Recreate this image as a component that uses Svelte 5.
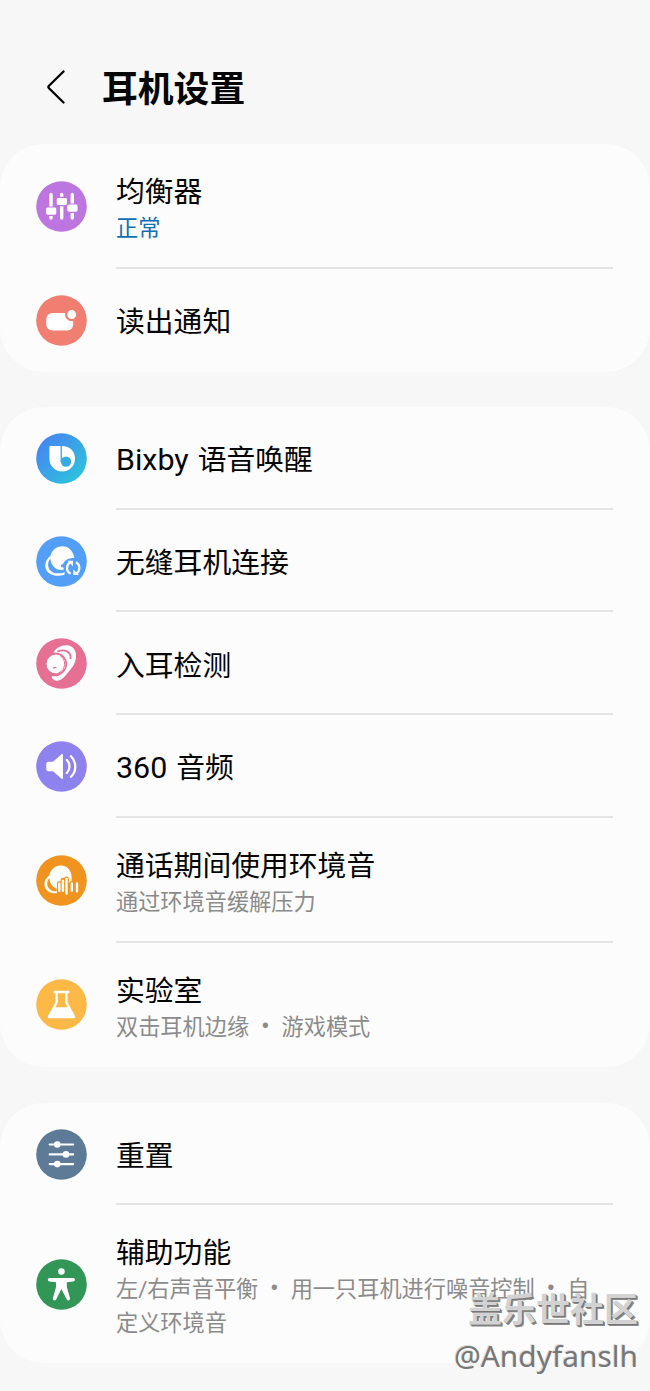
<script lang="ts">
  type Row = { icon: string; title: string; latin?: string; sub?: string[]; active?: boolean };

  const groups: Row[][] = [
    [
      { icon: 'equalizer', title: '均衡器', sub: ['正常'], active: true },
      { icon: 'notification', title: '读出通知' }
    ],
    [
      { icon: 'bixby', latin: 'Bixby', title: '语音唤醒' },
      { icon: 'seamless', title: '无缝耳机连接' },
      { icon: 'ear', title: '入耳检测' },
      { icon: 'audio', latin: '360', title: '音频' },
      { icon: 'ambient', title: '通话期间使用环境音', sub: ['通过环境音缓解压力'] },
      { icon: 'labs', title: '实验室', sub: ['双击耳机边缘', '游戏模式'] }
    ],
    [
      { icon: 'reset', title: '重置' },
      {
        icon: 'accessibility',
        title: '辅助功能',
        sub: ['左/右声音平衡', '用一只耳机进行噪音控制', '自定义环境音']
      }
    ]
  ];

  const colors: Record<string, string> = {
    equalizer: '#bd75e0',
    notification: '#f07f72',
    bixby: 'url(#bixby-fill)',
    seamless: '#539ff8',
    ear: '#e66f94',
    audio: '#8d82ee',
    ambient: '#f0941f',
    labs: '#fdb845',
    reset: '#5d7b96',
    accessibility: '#329657'
  };
</script>

<div class="page">
  <header>
    <button class="back" aria-label="返回">
      <svg width="20" height="34" viewBox="0 0 20 34" fill="none" stroke="#000" stroke-width="2.3" stroke-linecap="round" stroke-linejoin="round">
        <path d="M17.5 1.5 3 15.8Q1.8 17 3 18.2L17.5 32.5" />
      </svg>
    </button>
    <h1>耳机设置</h1>
  </header>

  {#each groups as rows}
    <section class="card">
      {#each rows as row}
        <div class="row" class:two={row.sub} class:three={row.sub && row.sub.length > 2}>
          <svg class="icon" viewBox="0 0 51 51">
            <defs>
              <linearGradient id="bixby-fill" x1="0" y1="0" x2="1" y2="1">
                <stop offset="0.15" stop-color="#4688f0" />
                <stop offset="0.9" stop-color="#2cc4dc" />
              </linearGradient>
            </defs>
            <circle cx="25.5" cy="25.5" r="25.3" fill={colors[row.icon]} />
            {#if row.icon === 'equalizer'}
              <path stroke="#fff" stroke-width="3.4" stroke-linecap="round" d="M15 13.4v23.6M25.7 13.4v23.6M36.3 13.4v23.6" />
              <g fill="#fff" stroke="#bd75e0" stroke-width="1.2">
                <rect x="9.5" y="26" width="11.4" height="8.3" rx="2" />
                <rect x="20.1" y="16.4" width="11.4" height="8.3" rx="2" />
                <rect x="30.7" y="23" width="11.4" height="8.3" rx="2" />
              </g>
            {:else if row.icon === 'notification'}
              <rect x="10.3" y="18" width="26.9" height="17.4" rx="6" fill="#fff" />
              <circle cx="35.7" cy="19.6" r="5.6" fill="#fff" stroke="#f07f72" stroke-width="2.2" />
            {:else if row.icon === 'bixby'}
              <path fill="#fff" d="M14.2 13H27C34.5 13.4 39 19 39 25.8a12.8 12.8 0 0 1-25.6 0V13.8q0-.8.8-.8z" />
              <path fill="none" stroke="#3b9fe9" stroke-width="1.3" d="M25.2 13v16" />
              <circle cx="30" cy="28.6" r="5.2" fill="#35abe4" />
            {:else if row.icon === 'seamless'}
              <path fill="#fff" d="M14.4 20C8 24.5 7.8 32.5 12.5 36.7 16.8 40.3 23 40.3 28.4 38.8L30 29 38.3 21.5C37 15 32.6 10.2 26.5 10.2 20.3 10.2 15.8 14.2 14.4 20z" />
              <path fill="#539ff8" d="M14.3 22.5C10.2 27.5 11.8 35.6 19.5 37.3L26 37.2 28.5 36V33.5C21.5 35.8 15 30.5 14.3 22.5z" />
              <path fill="#539ff8" d="M38.5 22.2C33 21.5 28.3 24.5 27 28.3L25 28.8V31L27.5 31.6C27.5 36 30 40.3 34 41.5H42V22.2z" />
              <path fill="none" stroke="#fff" stroke-width="2.2" d="M34.6 37.8a6.5 6.5 0 0 1-.5-11.4M40 26.2a6.500 6.500 0 0 1 .2 11.3" />
              <path fill="#fff" d="M31.5 24.8h5.500v5.500zM43 39h-5.700v-5.600z" />
            {:else if row.icon === 'ear'}
              <path fill="#fff" d="M17.4 14.6C20.2 9.6 26 6.6 31.5 7.3 38 8.2 41 13.8 39.9 20.5 38.8 27 35.6 30.2 31.4 35.3 27.8 39.8 24.8 43 20.6 42.7 17.6 42.5 15.8 40.7 15.5 38.2 24 39.3 30.9 33.5 31.1 26.2 31.3 19.2 25.5 14.4 17.4 14.6z" />
              <path fill="none" stroke="#e66f94" stroke-width="1.8" stroke-linecap="round" d="M22 13.4C28.5 10.5 35.2 14 34.6 20.3" />
              <circle cx="20" cy="26" r="10" fill="#fff" stroke="#e66f94" stroke-width="1" />
              <path fill="none" stroke="#e66f94" stroke-width="1" d="M23.6 17.2A10 10 0 0 1 22.6 35" />
              <path stroke="#e66f94" stroke-width="1.2" stroke-linecap="round" d="M17.3 29.8 20 29.3" />
            {:else if row.icon === 'audio'}
              <path fill="#fff" d="M12.3 20.7H17L25.6 13.2Q27 12.3 27 14V37Q27 38.7 25.6 37.8L17 30.3H12.3Q10.3 30.3 10.3 28.5V22.5Q10.3 20.7 12.3 20.7z" />
              <path fill="none" stroke="#fff" stroke-width="2.3" stroke-linecap="round" d="M30.8 19a9.2 9.2 0 0 1 0 13M35 15.2a14.5 14.5 0 0 1 0 20.6" />
            {:else if row.icon === 'ambient'}
              <path fill="#fff" d="M13.3 20.5C7.3 24.5 7 32 11.5 35.8 14.5 38.3 18.5 38.7 21.8 38L24 33 35.6 26.5V22C35.6 15.4 30.8 10.6 24.9 10.6 19 10.6 14.5 14.7 13.3 20.5z" />
              <path fill="#f0941f" d="M13.3 23C9.5 27.5 11 34.5 17.5 36.2L20.8 36.2V33.8C16.5 32.2 13.6 28.3 13.3 23z" />
              <path stroke="#f0941f" stroke-width="4.8" stroke-linecap="round" d="M23.3 28.7v10M26.9 25.2v13M30.5 24v15M35.8 28.5v8" />
              <path stroke="#fff" stroke-width="2.4" stroke-linecap="round" d="M23.3 28.7v7M26.9 26v9.7M30.5 24v14.5M35.8 28.5v7.2M41 28.5v7.7" />
            {:else if row.icon === 'labs'}
              <path fill="#fff" d="M18.7 11.7h13.6a1.2 1.2 0 0 1 0 2.5h-.8v9L39 36.8Q40 39.2 37.6 39.2H13.4Q11 39.2 12 36.8L19.5 23.2v-9h-.8a1.2 1.2 0 0 1 0-2.5z" />
              <path fill="#fdb845" d="M21.8 14.2h7.4v9.6l2.4 4.500H19.4l2.4-4.500z" />
            {:else if row.icon === 'reset'}
              <path stroke="#fff" stroke-width="2.2" stroke-linecap="round" d="M13.7 15.5h23.4M13.7 25.4h23.4M13.7 35.1h23.4" />
              <g fill="#fff">
                <circle cx="21.3" cy="15.5" r="3.3" />
                <circle cx="30" cy="25.4" r="3.3" />
                <circle cx="21.3" cy="35.1" r="3.3" />
              </g>
            {:else}
              <circle cx="25.4" cy="12.5" r="3.3" fill="#fff" />
              <path fill="#fff" d="M13.6 19h23.6a1.8 1.8 0 0 1 0 3.6l-6.4.6v4.6l3.2 11.4c.6 2.2-2.3 3-3.2 1.2L25.4 30 20.1 40.4c-.9 1.8-3.9 1-3.2-1.2l3.2-11.4v-4.6l-6.5-.6a1.800 1.800 0 0 1 0-3.600z" />
            {/if}
          </svg>
          <div class="text">
            <div class="title">
              {#if row.latin}<span class="latin">{row.latin}</span>{/if}{row.title}
            </div>
            {#if row.sub}
              <div class="sub" class:active={row.active}>
                {#each row.sub as part, i}{#if i > 0}<span class="dot">•</span>{/if}{part}{/each}
              </div>
            {/if}
          </div>
        </div>
      {/each}
    </section>
  {/each}

  <div class="watermark">
    <div class="site">盖乐世社区</div>
    <div class="user">@Andyfanslh</div>
  </div>
</div>

<style>
  :global(body) {
    margin: 0;
    background: #f7f7f7;
  }

  .page {
    position: relative;
    width: 650px;
    height: 1391px;
    overflow: hidden;
    background: #f7f7f7;
    color: #050505;
    font-family: Roboto, 'Noto Sans CJK SC', sans-serif;
  }

  header {
    display: flex;
    align-items: center;
    height: 144.2px;
    padding: 30px 0 0 46px;
    box-sizing: border-box;
  }

  .back {
    display: flex;
    width: 56px;
    padding: 0;
    border: none;
    background: none;
  }

  h1 {
    margin: 0;
    padding-top: 6px;
    font-size: 35.8px;
    font-weight: 700;
    line-height: 48px;
  }

  .card {
    margin-bottom: 35.5px;
    border-radius: 44px;
    background: #fcfcfc;
  }

  .row {
    display: flex;
    align-items: center;
    height: 102.7px;
    padding: 0 37px 0 36px;
    box-sizing: border-box;
  }

  .row.two {
    height: 124.7px;
  }

  .row.three {
    height: 158px;
  }

  .icon {
    width: 51px;
    height: 51px;
    margin-right: 29px;
    flex-shrink: 0;
  }

  .text {
    flex: 1;
    height: 100%;
    padding-top: 7px;
    display: flex;
    flex-direction: column;
    justify-content: center;
    border-bottom: 2px solid #e4e4e4;
    box-sizing: border-box;
  }

  .two .text {
    padding-top: 8px;
  }

  .row:last-child .text {
    border-bottom-color: transparent;
  }

  .title {
    font-size: 28.8px;
    line-height: 39px;
  }

  .latin {
    margin-right: 9px;
    font-size: 30.4px;
    line-height: 30px;
  }

  .sub {
    padding-right: 16px;
    font-size: 22.2px;
    line-height: 33.5px;
    color: #8b8b8b;
  }

  .sub.active {
    color: #0f6fb5;
  }

  .dot {
    display: inline-block;
    width: 32.4px;
    font-size: 26px;
    line-height: 20px;
    text-align: center;
  }

  .watermark {
    position: absolute;
    right: 12px;
    bottom: 12px;
    text-align: right;
  }

  .site {
    font-size: 34px;
    font-weight: 700;
    line-height: 45px;
    color: #d2d2d2;
    text-shadow: 1px 1px 0 #777, 2px 2px 0 #8a8a8a;
  }

  .user {
    font-family: 'Noto Sans', sans-serif;
    font-size: 29.9px;
    line-height: 46px;
    color: #777;
    text-shadow: -1px -1px 0 #ddd;
  }
</style>
